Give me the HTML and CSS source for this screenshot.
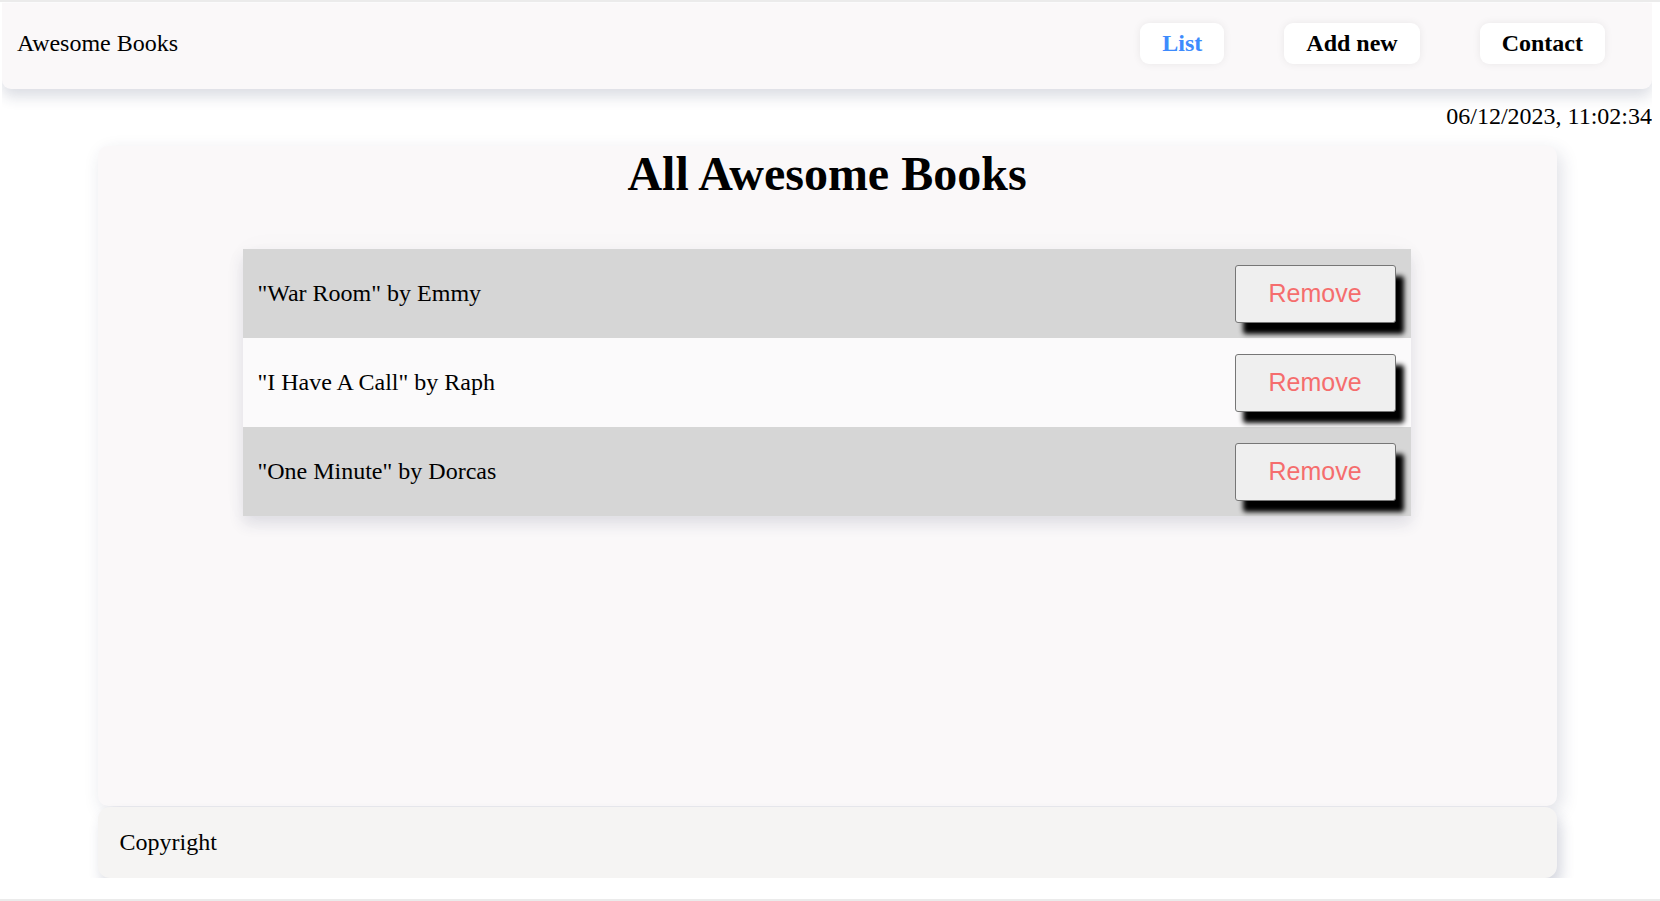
FILE: index.html
```html
<!DOCTYPE html>
<html lang="en">
<head>
<meta charset="utf-8">
<title>Awesome Books</title>
<link rel="stylesheet" href="styles.css">
</head>
<body>
<header class="topbar">
  <a class="brand">Awesome Books</a>
  <nav class="nav">
    <a class="nav-link active">List</a>
    <a class="nav-link">Add new</a>
    <a class="nav-link">Contact</a>
  </nav>
</header>
<p class="date">06/12/2023, 11:02:34</p>
<main class="card">
  <h1 class="title">All Awesome Books</h1>
  <ul class="book-list">
    <li class="book odd"><span class="book-text">"War Room" by Emmy</span><button class="remove">Remove</button></li>
    <li class="book even"><span class="book-text">"I Have A Call" by Raph</span><button class="remove">Remove</button></li>
    <li class="book odd"><span class="book-text">"One Minute" by Dorcas</span><button class="remove">Remove</button></li>
  </ul>
</main>
<footer class="footer">Copyright</footer>
</body>
</html>
```
FILE: styles.css
```css
html {
  min-height: 100%;
  box-sizing: border-box;
  border-top: 2px solid #ebebeb;
  border-bottom: 2px solid #ebebeb;
  background: #ffffff;
}
* { box-sizing: border-box; }
body {
  margin: 0 8px 0 2px;
  font-family: "Liberation Serif", "Times New Roman", serif;
  font-size: 24px;
  color: #000;
}
.topbar {
  margin-top: 1px;
  height: 86px;
  display: flex;
  align-items: center;
  justify-content: space-between;
  padding: 0 47px 5px 15px;
  background: #faf8f9;
  border-radius: 0 0 9px 9px;
  box-shadow: 0 8px 14px rgba(40, 50, 90, 0.16);
}
.brand { color: #000; }
.nav {
  display: flex;
  gap: 60px;
}
.nav-link {
  display: block;
  background: #fff;
  font-weight: bold;
  color: #000;
  height: 41px;
  line-height: 41px;
  padding: 0 22px;
  border-radius: 9px;
  box-shadow: 0 0 8px rgba(0, 0, 0, 0.07);
}
.nav-link.active { color: #3d8bfd; }
.date {
  margin: 14px 0 16px;
  text-align: right;
  line-height: 27px;
}
.card {
  width: 1459px;
  height: 660px;
  margin: 0 auto;
  padding-top: 1px;
  background: #faf8f9;
  border-radius: 10px;
  box-shadow: 4px 6px 18px rgba(40, 50, 90, 0.15);
}
.title {
  margin: 0;
  text-align: center;
  font-size: 48px;
  line-height: 53px;
}
.book-list {
  list-style: none;
  margin: 49px auto 0;
  padding: 0;
  width: 80%;
  box-shadow: 0 8px 14px rgba(40, 50, 90, 0.12), 0 0 30px rgba(0, 0, 0, 0.025);
}
.book {
  height: 89px;
  display: flex;
  align-items: center;
  justify-content: space-between;
  padding: 0 15px 0 14px;
}
.book.odd { background: #d6d6d6; }
.book.even { background: #fbfafb; }
.remove {
  width: 161px;
  height: 58px;
  font-family: "Liberation Sans", Arial, sans-serif;
  font-size: 25px;
  color: #f56d6d;
  background: #efefef;
  border: 1px solid #767676;
  border-radius: 3px;
  box-shadow: 8px 11px 5px #000;
}
.footer {
  width: 1459px;
  margin: 1px auto 0;
  padding: 22px;
  line-height: 27px;
  background: #f5f4f3;
  border-radius: 12px;
  box-shadow: 4px 9px 14px rgba(40, 50, 90, 0.2);
}
```
